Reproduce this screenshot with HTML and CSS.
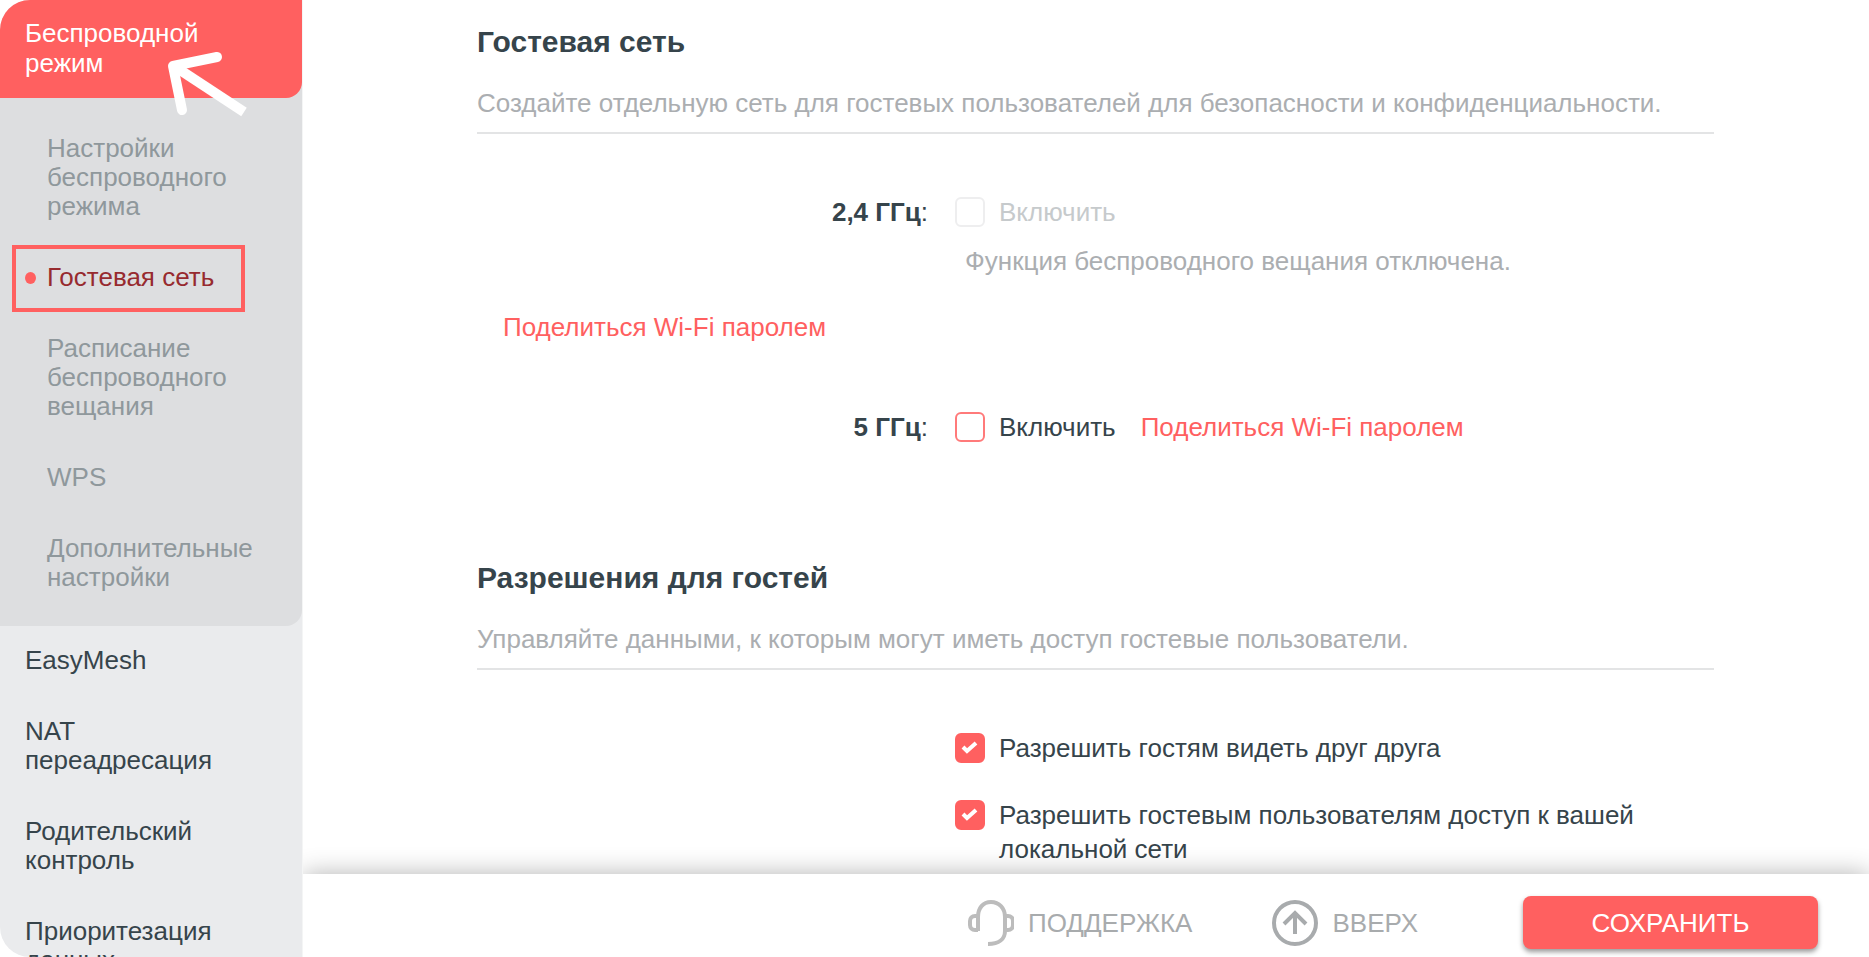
FILE: index.html
```html
<!DOCTYPE html>
<html lang="ru">

<head>
    <meta charset="UTF-8">
    <meta name="viewport" content="width=device-width, initial-scale=1.0">
    <title>Гостевая сеть</title>
    <link rel="stylesheet" href="styles.css">
</head>

<body>
    <nav class="sidebar">
        <a href="#" class="menu-head">Беспроводной режим</a>
        <svg class="pointer" viewBox="0 0 82 70" aria-hidden="true">
            <path d="M50 7 6 16l9 44" fill="none" stroke="#fff" stroke-width="10" stroke-linecap="round" stroke-linejoin="round" />
            <path d="M7 16 77 62" fill="none" stroke="#fff" stroke-width="10" />
        </svg>
        <div class="submenu">
            <a href="#">Настройки беспроводного режима</a>
            <a href="#" class="active">Гостевая сеть</a>
            <a href="#">Расписание беспроводного вещания</a>
            <a href="#">WPS</a>
            <a href="#">Дополнительные настройки</a>
        </div>
        <div class="menu">
            <a href="#">EasyMesh</a>
            <a href="#">NAT переадресация</a>
            <a href="#">Родительский контроль</a>
            <a href="#">Приоритезация данных</a>
        </div>
    </nav>

    <div class="page">
        <main class="content">
            <section>
                <h2>Гостевая сеть</h2>
                <p class="desc">Создайте отдельную сеть для гостевых пользователей для безопасности и конфиденциальности.</p>
                <div class="row">
                    <div class="row-label"><b>2,4 ГГц</b>:</div>
                    <div class="row-value">
                        <label class="check disabled"><input type="checkbox" disabled><span>Включить</span></label>
                    </div>
                </div>
                <div class="row">
                    <p class="hint">Функция беспроводного вещания отключена.</p>
                </div>
                <a href="#" class="share share-alone">Поделиться Wi-Fi паролем</a>
                <div class="row">
                    <div class="row-label"><b>5 ГГц</b>:</div>
                    <div class="row-value">
                        <label class="check"><input type="checkbox"><span>Включить</span></label>
                        <a href="#" class="share">Поделиться Wi-Fi паролем</a>
                    </div>
                </div>
            </section>

            <section>
                <h2>Разрешения для гостей</h2>
                <p class="desc">Управляйте данными, к которым могут иметь доступ гостевые пользователи.</p>
                <div class="row">
                    <div class="row-value options">
                        <label class="check"><input type="checkbox" checked><span>Разрешить гостям видеть друг друга</span></label>
                        <label class="check"><input type="checkbox" checked><span>Разрешить гостевым пользователям доступ к вашей локальной сети</span></label>
                    </div>
                </div>
            </section>
        </main>

        <footer class="bottom-bar">
            <a href="#" class="tool">
                <svg viewBox="0 0 46 46" fill="none" stroke="#bcbcbc" stroke-width="4" aria-hidden="true">
                    <path d="M10 31V17C10 8 15 2 23 2s14 6 14 15v14c0 8-6 13-17 13" />
                    <path d="M10 16H7c-3 0-5 2-5 5v4c0 3 2 5 5 5h3M37 16h3c3 0 5 2 5 5v4c0 3-2 5-5 5h-3" />
                </svg>
                ПОДДЕРЖКА
            </a>
            <a href="#" class="tool">
                <svg viewBox="0 0 46 46" fill="none" stroke="#a8abad" stroke-width="4" aria-hidden="true">
                    <circle cx="23" cy="23" r="21" />
                    <path d="M23 34V14M12 24l11-11 11 11" />
                </svg>
                ВВЕРХ
            </a>
            <button type="button" class="save">СОХРАНИТЬ</button>
        </footer>
    </div>
</body>

</html>
```
FILE: styles.css
```css
* {
    box-sizing: border-box;
}

body {
    margin: 0;
    height: 100vh;
    display: flex;
    overflow: hidden;
    background-color: #fff;
    color: #36444b;
    font-family: "Liberation Sans", Arial, sans-serif;
    font-size: 26px;
    line-height: 34px;
}

a {
    color: inherit;
    text-decoration: none;
}

h2,
p {
    margin: 0;
}

/* Sidebar */
.sidebar {
    position: relative;
    flex: 0 0 303px;
    overflow: hidden;
    border-radius: 30px 0 0 30px;
    border-right: 1px solid #f4f5f5;
    background-color: #eaebed;
    line-height: 29px;
}

.menu-head {
    position: relative;
    display: block;
    padding: 18px 80px 20px 25px;
    border-radius: 0 0 16px 0;
    background-color: #ff6060;
    color: #fff;
    line-height: 30px;
}

.pointer {
    position: absolute;
    top: 50px;
    left: 167px;
    z-index: 1;
    width: 82px;
    height: 70px;
}

.submenu,
.menu {
    display: flex;
    flex-direction: column;
    gap: 42px;
}

/* The grey also has to show in the rounded corner of the red head */
.submenu {
    margin-top: -16px;
    padding: 52px 40px 34px 47px;
    border-radius: 0 0 16px 0;
    background-color: #dddee0;
    color: #8f989c;
}

.submenu .active {
    position: relative;
    color: #972a2f;
}

.submenu .active::before {
    content: "";
    position: absolute;
    top: 9px;
    left: -22px;
    width: 11px;
    height: 12px;
    border-radius: 50%;
    background-color: #ff6060;
}

.submenu .active::after {
    content: "";
    position: absolute;
    top: -18px;
    bottom: -20px;
    left: -35px;
    width: 225px;
    border: 4px solid #ff6060;
}

.menu {
    padding: 20px 60px 20px 25px;
}

/* Content */
.page {
    flex: 1;
    min-width: 0;
    display: flex;
    flex-direction: column;
}

.content {
    flex: 1;
    min-height: 0;
    overflow: hidden;
    padding: 25px 155px 0 174px;
}

section {
    margin-bottom: 117px;
}

h2 {
    margin-bottom: 29px;
    font-size: 30px;
}

.desc {
    margin-bottom: 61px;
    padding-bottom: 14px;
    border-bottom: 2px solid #e3e4e5;
    color: #abaeb1;
    line-height: 30px;
}

.row {
    display: grid;
    grid-template-columns: 451px 1fr;
    column-gap: 27px;
}

.row-label {
    text-align: right;
}

.row-value {
    grid-column: 2;
    display: flex;
    gap: 25px;
}

.options {
    flex-direction: column;
    gap: 33px;
}

.check {
    display: flex;
    align-items: flex-start;
    gap: 14px;
}

.check input {
    appearance: none;
    flex: none;
    width: 30px;
    height: 30px;
    margin: 2px 0 0;
    border: 2px solid #ff7a7a;
    border-radius: 6px;
    background-color: #fff;
}

.check input:checked {
    border-color: #ff6060;
    background: #ff6060 url("data:image/svg+xml,%3Csvg xmlns='http://www.w3.org/2000/svg' viewBox='0 0 26 26'%3E%3Cpath d='M6 12l4 4 9-8' fill='none' stroke='%23fff' stroke-width='4'/%3E%3C/svg%3E") center / 26px 26px no-repeat;
}

.check.disabled {
    color: #c6cacc;
}

.check.disabled input {
    border-color: #eeeeef;
}

.hint {
    grid-column: 2;
    margin-top: 15px;
    padding-left: 10px;
    color: #abaeb1;
}

.share {
    color: #ff6060;
}

.share-alone {
    display: inline-block;
    margin: 32px 0 66px 26px;
    vertical-align: top;
}

/* Bottom bar */
.bottom-bar {
    position: relative;
    flex: 0 0 83px;
    display: flex;
    align-items: center;
    justify-content: flex-end;
    padding: 14px 51px 0 0;
    background-color: #fff;
    box-shadow: 0 0 24px rgba(0, 0, 0, 0.3);
    clip-path: inset(-40px 0 0 0);
    color: #a8abad;
}

.tool {
    display: flex;
    align-items: center;
    gap: 14px;
    margin-right: 80px;
}

.tool svg {
    width: 46px;
    height: 46px;
}

.save {
    width: 295px;
    height: 53px;
    margin-left: 25px;
    border: none;
    border-radius: 8px;
    background-color: #ff6060;
    box-shadow: 0 3px 5px rgba(0, 0, 0, 0.4);
    color: #fff;
    font: inherit;
    cursor: pointer;
}
```
